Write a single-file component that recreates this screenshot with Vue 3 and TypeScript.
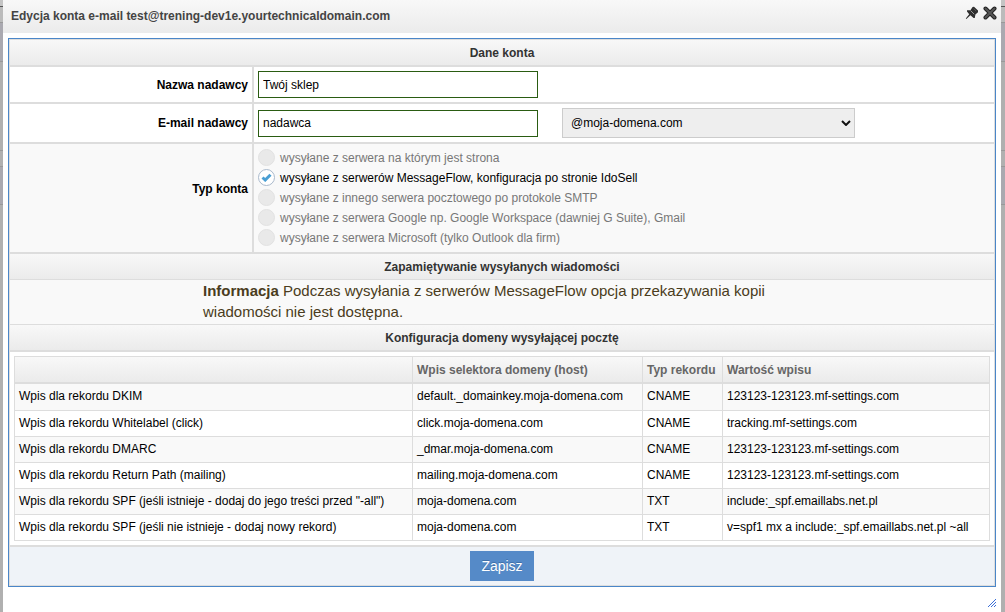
<script setup lang="ts">
import { ref } from 'vue'

interface AccountType {
  id: string
  label: string
}

interface DnsRecord {
  name: string
  host: string
  type: string
  value: string
}

const senderName = ref('Twój sklep')
const senderEmail = ref('nadawca')
const domain = ref('@moja-domena.com')
const accountType = ref('messageflow')

const accountTypes: AccountType[] = [
  { id: 'site', label: 'wysyłane z serwera na którym jest strona' },
  { id: 'messageflow', label: 'wysyłane z serwerów MessageFlow, konfiguracja po stronie IdoSell' },
  { id: 'smtp', label: 'wysyłane z innego serwera pocztowego po protokole SMTP' },
  { id: 'google', label: 'wysyłane z serwera Google np. Google Workspace (dawniej G Suite), Gmail' },
  { id: 'microsoft', label: 'wysyłane z serwera Microsoft (tylko Outlook dla firm)' },
]

const records: DnsRecord[] = [
  { name: 'Wpis dla rekordu DKIM', host: 'default._domainkey.moja-domena.com', type: 'CNAME', value: '123123-123123.mf-settings.com' },
  { name: 'Wpis dla rekordu Whitelabel (click)', host: 'click.moja-domena.com', type: 'CNAME', value: 'tracking.mf-settings.com' },
  { name: 'Wpis dla rekordu DMARC', host: '_dmar.moja-domena.com', type: 'CNAME', value: '123123-123123.mf-settings.com' },
  { name: 'Wpis dla rekordu Return Path (mailing)', host: 'mailing.moja-domena.com', type: 'CNAME', value: '123123-123123.mf-settings.com' },
  { name: 'Wpis dla rekordu SPF (jeśli istnieje - dodaj do jego treści przed "-all")', host: 'moja-domena.com', type: 'TXT', value: 'include:_spf.emaillabs.net.pl' },
  { name: 'Wpis dla rekordu SPF (jeśli nie istnieje - dodaj nowy rekord)', host: 'moja-domena.com', type: 'TXT', value: 'v=spf1 mx a include:_spf.emaillabs.net.pl ~all' },
]
</script>

<template>
  <div class="backdrop">
    <section class="dialog" role="dialog" aria-labelledby="dialog-title">
      <header class="titlebar">
        <h1 id="dialog-title">Edycja konta e-mail test@trening-dev1e.yourtechnicaldomain.com</h1>
        <div class="tools">
          <button type="button" aria-label="Przypnij">
            <svg width="14" height="14" viewBox="0 0 14 14">
              <path d="M9 .8 13 4.600v1.600L10.400 8.600 9.800 12 8.600 12 5.400 9.200 1.400 13 .8 12.400 4.200 8.200 2 5.600V4.200L5.400 4.200 7.600 1z" fill="#2e2e2e" />
              <path d="M5.600 4.600 9.200 8.200" stroke="#999" fill="none" />
              <path d="M8.600 2.600 11.200 5" stroke="#555" fill="none" />
            </svg>
          </button>
          <button type="button" aria-label="Zamknij">
            <svg width="14" height="14" viewBox="0 0 14 14">
              <path d="M2.500 2.500 11.500 11.500M11.500 2.500 2.500 11.500" stroke="#222" stroke-width="4" stroke-linecap="round" />
              <path d="M2.500 2.500 11.500 11.500M11.500 2.500 2.500 11.500" stroke="#555" stroke-width="2" stroke-linecap="round" />
            </svg>
          </button>
        </div>
      </header>

      <form class="panel" @submit.prevent>
        <h2 class="band">Dane konta</h2>
        <div class="row">
          <label class="caption" for="sender-name">Nazwa nadawcy</label>
          <div class="field"><input id="sender-name" v-model="senderName" class="text" type="text" /></div>
        </div>
        <div class="row">
          <label class="caption" for="sender-email">E-mail nadawcy</label>
          <div class="field">
            <input id="sender-email" v-model="senderEmail" class="text" type="text" />
            <div class="select">
              <select v-model="domain" aria-label="Domena">
                <option>@moja-domena.com</option>
              </select>
              <svg width="10" height="6" viewBox="0 0 10 6"><path d="M1 1l4 4 4-4" fill="none" stroke="#111" stroke-width="2" /></svg>
            </div>
          </div>
        </div>
        <div class="row shaded" role="radiogroup" aria-labelledby="type-label">
          <span id="type-label" class="caption">Typ konta</span>
          <div class="field options">
            <label v-for="t in accountTypes" :key="t.id" class="option" :class="{ active: t.id === accountType }">
              <span class="radio">
                <input v-model="accountType" type="radio" name="type" :value="t.id" :disabled="t.id !== accountType" />
                <svg v-if="t.id === accountType" width="11" height="9" viewBox="0 0 11 9"><path d="M1.500 4.500l2.700 2.500L9.500 1.800" fill="none" stroke="#4a9fd4" stroke-width="3" /></svg>
              </span>
              {{ t.label }}
            </label>
          </div>
        </div>

        <h2 class="band thin">Zapamiętywanie wysyłanych wiadomości</h2>
        <div class="notice">
          <p><strong>Informacja</strong> Podczas wysyłania z serwerów MessageFlow opcja przekazywania kopii wiadomości nie jest dostępna.</p>
        </div>

        <h2 class="band">Konfiguracja domeny wysyłającej pocztę</h2>
        <div class="records">
          <table>
            <colgroup><col class="c-name" /><col class="c-host" /><col class="c-type" /><col /></colgroup>
            <thead>
              <tr>
                <th></th>
                <th>Wpis selektora domeny (host)</th>
                <th>Typ rekordu</th>
                <th>Wartość wpisu</th>
              </tr>
            </thead>
            <tbody>
              <tr v-for="r in records" :key="r.name">
                <td>{{ r.name }}</td>
                <td>{{ r.host }}</td>
                <td>{{ r.type }}</td>
                <td>{{ r.value }}</td>
              </tr>
            </tbody>
          </table>
        </div>
        <footer class="actions"><button type="submit" class="save">Zapisz</button></footer>
      </form>
      <svg class="grip" width="8" height="8" viewBox="0 0 8 8"><path d="M0 8 8 0M3 8l5-5M6 8l2-2" stroke="#3b6fd8" stroke-width="1" fill="none" /></svg>
    </section>
  </div>
</template>

<style>
body {
  background: #b0b0b0;
}
</style>

<style scoped>
* {
  box-sizing: border-box;
}
.backdrop {
  min-height: 100vh;
  display: flex;
  padding: 0 4px 0 3px;
  font: 12px/16px "Liberation Sans", Arial, Helvetica, sans-serif;
  color: #000;
  background: linear-gradient(
    #c4c4c4 0 6px, #555 6px 7px, #bbb 7px 22px, #999 22px 23px,
    #aaa9b0 23px 61px, #999 61px 62px, #b0b0b0 62px 150px, #999 150px 151px,
    #b0b0b0 151px 166px, #999 166px 167px, #aaa9b0 167px 204px, #999 204px 205px,
    #b0b0b0 205px
  );
}
.dialog {
  position: relative;
  flex: 1;
  min-width: 0;
  background: #fff;
}
.titlebar {
  display: flex;
  align-items: flex-start;
  justify-content: space-between;
  height: 33px;
  padding: 6px 4px 0 8px;
  background: linear-gradient(#f8f8f8, #ebebeb);
}
h1,
h2,
p {
  margin: 0;
  font-size: 12px;
}
h1 {
  line-height: 20px;
  color: #444;
}
.tools {
  display: flex;
  gap: 4px;
}
.tools button {
  display: flex;
  padding: 0;
  border: 0;
  background: none;
}
.panel {
  margin: 5px 5px 0;
  border: 1px solid #4a86c8;
  box-shadow: inset 0 0 0 1px #ddd;
  padding: 1px;
}
.band {
  height: 27px;
  line-height: 26px;
  text-align: center;
  color: #333;
  background: linear-gradient(#f8f8f8, #ebebeb);
  border-bottom: 2px solid #ddd;
}
.band.thin {
  height: 26px;
  border-bottom-width: 1px;
}
.row {
  display: grid;
  grid-template-columns: 244px 1fr;
  border-bottom: 2px solid #ddd;
}
.row.shaded {
  background: #f9f9f9;
}
.caption {
  display: flex;
  align-items: center;
  justify-content: flex-end;
  padding-right: 4px;
  border-right: 2px solid #ddd;
  font-weight: bold;
}
.shaded .caption {
  padding-bottom: 18px;
}
.field {
  display: flex;
  align-items: center;
  gap: 24px;
  padding: 4px;
}
.text {
  width: 280px;
  height: 27px;
  padding: 0 4px;
  border: 1px solid #2a5c12;
  font: inherit;
  background: #fff;
}
.select {
  display: grid;
  align-items: center;
  width: 293px;
}
.select select,
.select svg {
  grid-area: 1 / 1;
}
.select select {
  appearance: none;
  height: 30px;
  padding: 0 8px;
  border: 1px solid #ccc;
  border-radius: 0;
  background: #eee;
  color: #000;
  font: inherit;
}
.select svg {
  justify-self: end;
  margin-right: 4px;
  pointer-events: none;
}
.field.options {
  flex-direction: column;
  align-items: flex-start;
  gap: 0;
}
.option {
  display: flex;
  align-items: center;
  gap: 5px;
  height: 20px;
  color: #777;
}
.option.active {
  color: #000;
}
.radio {
  display: grid;
  place-items: center;
  height: 18px;
  align-items: start;
}
.radio > * {
  grid-area: 1 / 1;
}
.radio svg {
  margin-top: 4px;
}
.radio input {
  appearance: none;
  width: 17px;
  height: 17px;
  margin: 0;
  border: 1px solid #e2e2e2;
  border-radius: 50%;
  background: #e9e9e9;
}
.radio input:checked {
  border-color: #a9b9cc;
  background: #fff;
}
.notice {
  display: flex;
  justify-content: center;
  height: 45px;
  background: #f9f9f9;
  border-bottom: 1px solid #ddd;
}
.notice p {
  width: 598px;
  font-size: 15px;
  line-height: 21px;
  color: #4a3c20;
}
.records {
  padding: 4px;
  border-bottom: 2px solid #ddd;
}
table {
  width: 100%;
  table-layout: fixed;
  border-collapse: separate;
  border-spacing: 0;
  border-top: 1px solid #ddd;
  border-left: 1px solid #ddd;
}
.c-name {
  width: 398px;
}
.c-host {
  width: 230px;
}
.c-type {
  width: 80px;
}
th,
td {
  height: 26px;
  padding: 0 4px;
  text-align: left;
  white-space: nowrap;
  border-right: 1px solid #ddd;
  border-bottom: 1px solid #ddd;
}
th {
  height: 27px;
  color: #666;
  background: linear-gradient(#f8f8f8, #ebebeb);
  border-bottom-width: 2px;
}
tbody tr:first-child td {
  height: 27px;
}
tbody td {
  padding-bottom: 2px;
}
tbody tr:nth-child(odd) {
  background: #f9f9f9;
}
.actions {
  display: flex;
  justify-content: center;
  padding: 4px;
  background: #eff3f8;
}
.save {
  height: 30px;
  padding: 0 11px;
  border: 0;
  background: #558ac8;
  color: #fff;
  font: 14px/16px "Liberation Sans", Arial, Helvetica, sans-serif;
  text-shadow: 0 -1px 0 #3f6fa8;
}
.grip {
  position: absolute;
  right: 5px;
  bottom: 5px;
}
</style>
